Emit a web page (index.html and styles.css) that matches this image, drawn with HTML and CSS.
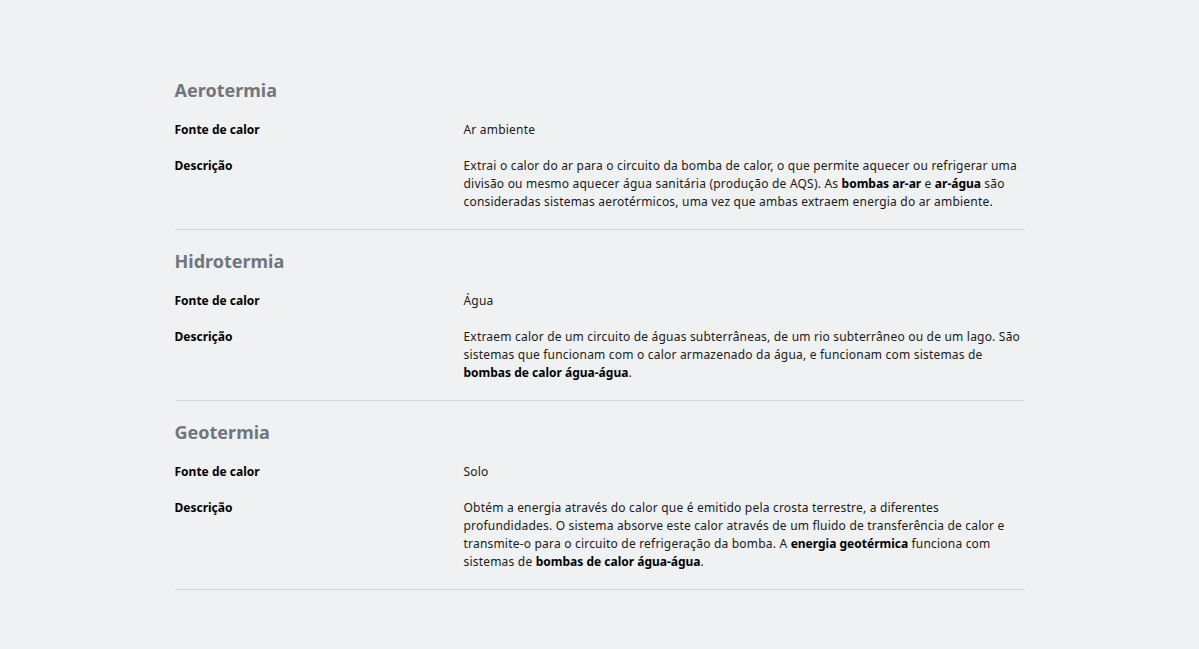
FILE: index.html
```html
<!DOCTYPE html>
<html lang="pt">
<head>
    <meta charset="UTF-8">
    <meta name="viewport" content="width=device-width, initial-scale=1.0">
    <title>Tipos de energia</title>
    <link rel="stylesheet" href="styles.css">
</head>
<body>
    <div class="container">
        <section class="energy">
            <h2>Aerotermia</h2>
            <div class="row">
                <div class="label">Fonte de calor</div>
                <div class="value">Ar ambiente</div>
            </div>
            <div class="row">
                <div class="label">Descrição</div>
                <div class="value">Extrai o calor do ar para o circuito da bomba de calor, o que permite aquecer ou refrigerar uma divisão ou mesmo aquecer água sanitária (produção de AQS). As <strong>bombas ar-ar</strong> e <strong>ar-água</strong> são consideradas sistemas aerotérmicos, uma vez que ambas extraem energia do ar ambiente.</div>
            </div>
        </section>

        <section class="energy">
            <h2>Hidrotermia</h2>
            <div class="row">
                <div class="label">Fonte de calor</div>
                <div class="value">Água</div>
            </div>
            <div class="row">
                <div class="label">Descrição</div>
                <div class="value">Extraem calor de um circuito de águas subterrâneas, de um rio subterrâneo ou de um lago. São sistemas que funcionam com o calor armazenado da água, e funcionam com sistemas de <strong>bombas de calor água-água</strong>.</div>
            </div>
        </section>

        <section class="energy">
            <h2>Geotermia</h2>
            <div class="row">
                <div class="label">Fonte de calor</div>
                <div class="value">Solo</div>
            </div>
            <div class="row">
                <div class="label">Descrição</div>
                <div class="value">Obtém a energia através do calor que é emitido pela crosta terrestre, a diferentes profundidades. O sistema absorve este calor através de um fluido de transferência de calor e transmite-o para o circuito de refrigeração da bomba. A <strong>energia geotérmica</strong> funciona com sistemas de <strong>bombas de calor água-água</strong>.</div>
            </div>
        </section>
    </div>
</body>
</html>
```

FILE: styles.css
```css
body {
    margin: 0;
    background-color: #eff1f3;
    font-family: 'Noto Sans', 'Open Sans', sans-serif;
    color: #1a1a1a;
}
.container {
    max-width: 850px;
    margin: 0 auto;
    padding-top: 59px;
}
.energy {
    padding: 19px 0 18px;
    border-bottom: 1px solid #d5d8db;
}
.energy h2 {
    margin: 0 0 19px;
    font-size: 18px;
    line-height: 24px;
    font-weight: 700;
    color: #71767c;
}
.row {
    display: grid;
    grid-template-columns: 289px 1fr;
    font-size: 12px;
    line-height: 18px;
}
.row + .row {
    margin-top: 18px;
}
.label {
    font-weight: 700;
    color: #000;
}
.value {
    letter-spacing: 0.2px;
}
.value strong {
    font-weight: 700;
    letter-spacing: 0;
    color: #000;
}
```
